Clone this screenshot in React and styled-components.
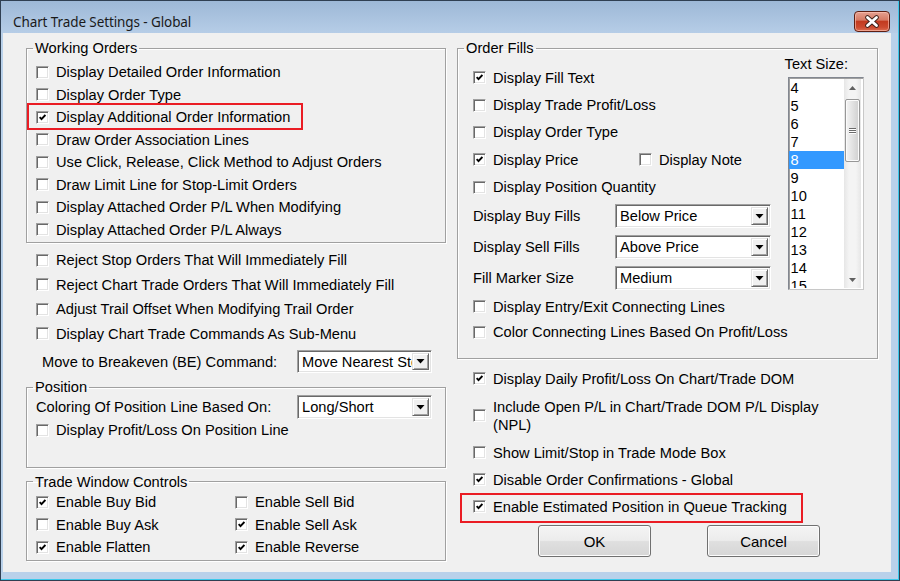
import React from 'react';
import styled, { createGlobalStyle } from 'styled-components';

const GlobalStyle = createGlobalStyle`
  html, body { margin: 0; padding: 0; background: #fff; }
  body {
    font-family: "Liberation Sans", Arial, sans-serif;
    font-size: 14.65px;
    color: #000;
  }
`;

const Window = styled.div`
  width: 900px;
  height: 581px;
  box-sizing: border-box;
  display: flex;
  flex-direction: column;
  border: 1px solid #2f3f52;
  padding: 0 8px 8px 2px;
  background: linear-gradient(to bottom, #9db8d7 0, #b6cde7 32px, #b9d1ea 32px, #b9d1ea 100%);
  box-shadow: inset -1px -1px 0 #3cc8ea;
  overflow: hidden;
`;

const TitleBar = styled.div`
  height: 32px;
  flex: none;
  display: flex;
  align-items: flex-start;
  padding: 0 1px 0 10px;
`;

const Title = styled.div`
  font-family: "Noto Sans", "Open Sans", sans-serif;
  font-size: 13.5px;
  line-height: 18px;
  margin-top: 12px;
  color: #1a1a1a;
  letter-spacing: -0.1px;
`;

const CloseBtn = styled.div`
  margin-left: auto;
  margin-top: 10px;
  width: 36px;
  height: 21px;
  box-sizing: border-box;
  border: 1px solid #5e1f13;
  border-radius: 4px;
  background: linear-gradient(to bottom, #e5a191 0%, #d67a64 42%, #c23b20 50%, #cc4a2f 80%, #dc6e52 100%);
  box-shadow: inset 0 0 0 1px rgba(255, 200, 185, 0.6);
  display: flex;
  align-items: center;
  justify-content: center;
`;

const Client = styled.div`
  flex: 1;
  background: #f0f0f0;
  display: grid;
  grid-template-columns: 420px 421px;
  column-gap: 11px;
  align-items: start;
  padding: 7px 0 0 23px;
`;

const Column = styled.div`
  display: flex;
  flex-direction: column;
`;

const Group = styled.fieldset`
  margin: ${p => p.$mt || 0}px 0 0 0;
  padding: ${p => p.$pt || 0}px ${p => p.$pr || 0}px 0 9px;
  height: ${p => p.$h}px;
  box-sizing: border-box;
  border: 1px solid #a0a0a0;
  box-shadow: inset 1px 1px 0 #fff, 1px 1px 0 #fff;
  min-width: 0;
`;

const Legend = styled.legend`
  padding: 0 2px;
  margin-left: -3px;
  line-height: 16px;
  font-size: 14.65px;
`;

const Rows = styled.div`
  display: flex;
  flex-direction: column;
  margin-top: ${p => p.$mt || 0}px;
  padding-left: ${p => p.$pl || 0}px;
`;

const Row = styled.div`
  position: relative;
  display: flex;
  align-items: center;
  gap: 7px;
  height: ${p => p.$h}px;
  flex: none;
  white-space: nowrap;
  margin-top: ${p => p.$mt || 0}px;

  ${p => p.$hl && `
    &::after {
      content: "";
      position: absolute;
      left: ${p.$hl.left}px;
      top: ${p.$hl.top}px;
      width: ${p.$hl.width}px;
      height: ${p.$hl.height}px;
      box-sizing: border-box;
      border: 2px solid #ea1c24;
      pointer-events: none;
    }
  `}
`;

const Item = styled.div`
  display: flex;
  align-items: center;
  gap: 7px;
  width: ${p => (p.$w ? `${p.$w}px` : 'auto')};
  flex: none;
`;

const Box = styled.span`
  width: 13px;
  height: 13px;
  box-sizing: border-box;
  flex: none;
  background: #fff;
  border: 1px solid;
  border-color: #a0a0a0 #fff #fff #a0a0a0;
  box-shadow: inset 1px 1px 0 #696969, inset -1px -1px 0 #e3e3e3;
  display: flex;
  align-items: center;
  justify-content: center;
`;

const Label = styled.span`
  line-height: 18px;
  white-space: nowrap;
`;

const Check = ({ on, children, w }) => (
  <Item $w={w}>
    <Box>
      {on && (
        <svg width="7" height="7" viewBox="0 0 7 7">
          <path d="M0.6 3.1 L2.5 5.1 L6.4 0.9" fill="none" stroke="#000" strokeWidth="1.9" />
        </svg>
      )}
    </Box>
    <Label>{children}</Label>
  </Item>
);

const FieldRow = styled.div`
  display: grid;
  grid-template-columns: ${p => p.$lw}px ${p => p.$sw}px;
  align-items: center;
  height: ${p => p.$h}px;
  flex: none;
  padding-left: ${p => p.$pl || 0}px;
  margin-top: ${p => p.$mt || 0}px;
  white-space: nowrap;
`;

const SelectBox = styled.div`
  height: ${p => p.$h || 23}px;
  box-sizing: border-box;
  background: #fff;
  border: 1px solid;
  border-color: #a0a0a0 #fff #fff #a0a0a0;
  box-shadow: inset 1px 1px 0 #696969, inset -1px -1px 0 #e3e3e3;
  padding: 2px;
  display: flex;
  align-items: stretch;
`;

const SelText = styled.span`
  flex: 1;
  overflow: hidden;
  white-space: nowrap;
  padding-left: 2px;
  display: flex;
  align-items: center;
`;

const DropBtn = styled.span`
  width: 17px;
  flex: none;
  box-sizing: border-box;
  background: #f0f0f0;
  border: 1px solid;
  border-color: #e3e3e3 #696969 #696969 #e3e3e3;
  box-shadow: inset 1px 1px 0 #fff, inset -1px -1px 0 #a0a0a0;
  display: flex;
  align-items: center;
  justify-content: center;
`;

const Select = ({ value, h }) => (
  <SelectBox $h={h}>
    <SelText>{value}</SelText>
    <DropBtn>
      <svg width="9" height="5" viewBox="0 0 9 5">
        <path d="M0.5 0 H8.5 L4.5 4.5 Z" fill="#000" />
      </svg>
    </DropBtn>
  </SelectBox>
);

const FillsBody = styled.div`
  display: flex;
  justify-content: space-between;
`;

const FillsLeft = styled.div`
  display: flex;
  flex-direction: column;
  padding: 8px 0 0 6px;
`;

const FillsRight = styled.div`
  display: flex;
  flex-direction: column;
  width: 82px;
`;

const SmallLabel = styled.div`
  line-height: 16px;
  margin-left: -3px;
`;

const ListBox = styled.div`
  margin-top: 5px;
  height: 213px;
  box-sizing: border-box;
  background: #fff;
  border: 1px solid;
  border-color: #828790 #c8c8c8 #c8c8c8 #828790;
  box-shadow: inset 1px 1px 0 #a0a0a0;
  padding: 1px 2px 1px 0;
  display: flex;
  overflow: hidden;
`;

const ListItems = styled.div`
  flex: 1;
  display: flex;
  flex-direction: column;
  overflow: hidden;
`;

const ListItem = styled.div`
  height: 18px;
  line-height: 18px;
  flex: none;
  padding-left: 2px;
  background: ${p => (p.$sel ? '#3399ff' : 'transparent')};
  color: ${p => (p.$sel ? '#fff' : '#000')};
`;

const ScrollBar = styled.div`
  width: 17px;
  flex: none;
  display: flex;
  flex-direction: column;
  align-items: center;
  background: linear-gradient(to right, #e6e6e6, #f4f4f4 30%, #f4f4f4 70%, #e6e6e6);
`;

const Arrow = styled.div`
  height: 17px;
  width: 17px;
  flex: none;
  display: flex;
  align-items: center;
  justify-content: center;
`;

const Thumb = styled.div`
  margin-top: 3px;
  width: 15px;
  height: 63px;
  box-sizing: border-box;
  border: 1px solid #979797;
  border-radius: 2px;
  background: linear-gradient(to right, #f4f4f4, #e2e2e2 50%, #d0d0d0);
  box-shadow: inset 0 0 0 1px #fbfbfb;
  display: flex;
  flex-direction: column;
  align-items: center;
  justify-content: center;
  gap: 1px;
`;

const Grip = styled.span`
  width: 7px;
  height: 1px;
  background: #6a6a6a;
  box-shadow: 0 1px 0 #fff;
`;

const Track = styled.div`
  flex: 1;
`;

const Buttons = styled.div`
  display: flex;
  gap: 56px;
  padding-left: 81px;
  margin-top: 5px;
`;

const Button = styled.div`
  width: 113px;
  height: 32px;
  box-sizing: border-box;
  border: 1px solid #707070;
  border-radius: 3px;
  background: linear-gradient(to bottom, #f4f4f4 0%, #ececec 48%, #dfdfdf 52%, #d6d6d6 100%);
  box-shadow: inset 0 0 0 1px #fcfcfc;
  display: flex;
  align-items: center;
  justify-content: center;
  font-size: 15px;
`;

const workingOrders = [
  ['Display Detailed Order Information', false],
  ['Display Order Type', false],
  ['Display Additional Order Information', true, { left: -9, top: -2.75, width: 276, height: 27 }],
  ['Draw Order Association Lines', false],
  ['Use Click, Release, Click Method to Adjust Orders', false],
  ['Draw Limit Line for Stop-Limit Orders', false],
  ['Display Attached Order P/L When Modifying', false],
  ['Display Attached Order P/L Always', false],
];

const rejectRows = [
  'Reject Stop Orders That Will Immediately Fill',
  'Reject Chart Trade Orders That Will Immediately Fill',
  'Adjust Trail Offset When Modifying Trail Order',
  'Display Chart Trade Commands As Sub-Menu',
];

const tradeControls = [
  [['Enable Buy Bid', true], ['Enable Sell Bid', false]],
  [['Enable Buy Ask', false], ['Enable Sell Ask', true]],
  [['Enable Flatten', true], ['Enable Reverse', true]],
];

const fillSelects = [
  ['Display Buy Fills', 'Below Price'],
  ['Display Sell Fills', 'Above Price'],
  ['Fill Marker Size', 'Medium'],
];

const sizes = ['4', '5', '6', '7', '8', '9', '10', '11', '12', '13', '14', '15'];

export default function App() {
  return (
    <>
      <GlobalStyle />
      <Window>
        <TitleBar>
          <Title>Chart Trade Settings - Global</Title>
          <CloseBtn>
            <svg width="16" height="13" viewBox="0 0 16 13">
              <path d="M3.5 2.5 L12.5 10.5 M12.5 2.5 L3.5 10.5" stroke="#3d2019" strokeWidth="4.6" strokeLinecap="round" />
              <path d="M3.5 2.5 L12.5 10.5 M12.5 2.5 L3.5 10.5" stroke="#fff" strokeWidth="2.8" strokeLinecap="round" />
            </svg>
          </CloseBtn>
        </TitleBar>
        <Client>
          <Column>
            <Group $h={203} $pt={4.75}>
              <Legend>Working Orders</Legend>
              {workingOrders.map(([t, on, hl]) => (
                <Row key={t} $h={22.5} $hl={hl}>
                  <Check on={on}>{t}</Check>
                </Row>
              ))}
            </Group>

            <Rows $mt={4.75} $pl={10}>
              {rejectRows.map(t => (
                <Row key={t} $h={24.5}>
                  <Check>{t}</Check>
                </Row>
              ))}
            </Rows>

            <FieldRow $lw={255} $sw={135} $h={23} $pl={16} $mt={4.25}>
              <span>Move to Breakeven (BE) Command:</span>
              <Select value="Move Nearest Stop" />
            </FieldRow>

            <Group $h={89} $mt={6}>
              <Legend>Position</Legend>
              <FieldRow $lw={261} $sw={135} $h={23}>
                <span>Coloring Of Position Line Based On:</span>
                <Select value="Long/Short" h={24} />
              </FieldRow>
              <Row $h={22} $mt={1}>
                <Check>Display Profit/Loss On Position Line</Check>
              </Row>
            </Group>

            <Group $h={87} $mt={5.8} $pt={1.2}>
              <Legend>Trade Window Controls</Legend>
              {tradeControls.map(([a, b]) => (
                <Row key={a[0]} $h={22.5}>
                  <Check on={a[1]} w={192}>{a[0]}</Check>
                  <Check on={b[1]}>{b[0]}</Check>
                </Row>
              ))}
            </Group>
          </Column>

          <Column>
            <Group $h={319} $pr={13}>
              <Legend>Order Fills</Legend>
              <FillsBody>
                <FillsLeft>
                  <Row $h={27.4}><Check on>Display Fill Text</Check></Row>
                  <Row $h={27.4}><Check>Display Trade Profit/Loss</Check></Row>
                  <Row $h={27.4}><Check>Display Order Type</Check></Row>
                  <Row $h={27.4}>
                    <Check on w={159}>Display Price</Check>
                    <Check>Display Note</Check>
                  </Row>
                  <Row $h={27.4}><Check>Display Position Quantity</Check></Row>
                  {fillSelects.map(([l, v]) => (
                    <FieldRow key={l} $lw={142} $sw={156} $h={31}>
                      <span>{l}</span>
                      <Select value={v} h={24} />
                    </FieldRow>
                  ))}
                  <Row $h={25.7}><Check>Display Entry/Exit Connecting Lines</Check></Row>
                  <Row $h={25.7}><Check>Color Connecting Lines Based On Profit/Loss</Check></Row>
                </FillsLeft>
                <FillsRight>
                  <SmallLabel>Text Size:</SmallLabel>
                  <ListBox>
                    <ListItems>
                      {sizes.map(s => (
                        <ListItem key={s} $sel={s === '8'}>{s}</ListItem>
                      ))}
                    </ListItems>
                    <ScrollBar>
                      <Arrow>
                        <svg width="7" height="4" viewBox="0 0 7 4">
                          <path d="M0 4 H7 L3.5 0 Z" fill="#606060" />
                        </svg>
                      </Arrow>
                      <Thumb>
                        <Grip />
                        <Grip />
                        <Grip />
                      </Thumb>
                      <Track />
                      <Arrow>
                        <svg width="7" height="4" viewBox="0 0 7 4">
                          <path d="M0 0 H7 L3.5 4 Z" fill="#606060" />
                        </svg>
                      </Arrow>
                    </ScrollBar>
                  </ListBox>
                </FillsRight>
              </FillsBody>
            </Group>

            <Rows $mt={6} $pl={16}>
              <Row $h={27}><Check on>Display Daily Profit/Loss On Chart/Trade DOM</Check></Row>
              <Row $h={47}>
                <Check>
                  Include Open P/L in Chart/Trade DOM P/L Display
                  <br />
                  (NPL)
                </Check>
              </Row>
              <Row $h={27}><Check>Show Limit/Stop in Trade Mode Box</Check></Row>
              <Row $h={27}><Check on>Disable Order Confirmations - Global</Check></Row>
              <Row $h={27} $hl={{ left: -13, top: -0.3, width: 343, height: 30 }}>
                <Check on>Enable Estimated Position in Queue Tracking</Check>
              </Row>
            </Rows>

            <Buttons>
              <Button>OK</Button>
              <Button>Cancel</Button>
            </Buttons>
          </Column>
        </Client>
      </Window>
    </>
  );
}
